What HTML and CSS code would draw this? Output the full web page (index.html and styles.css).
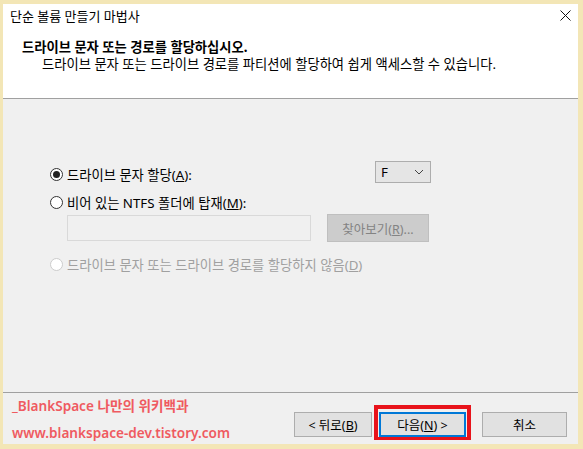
FILE: index.html
```html
<!DOCTYPE html>
<html lang="ko">
<head>
    <meta charset="UTF-8">
    <meta name="viewport" content="width=device-width, initial-scale=1.0">
    <title>단순 볼륨 만들기 마법사</title>
    <link rel="stylesheet" href="styles.css">
</head>
<body>
    <div class="dialog">
        <div class="header">
            <div class="titlebar">
                <span class="title">단순 볼륨 만들기 마법사</span>
                <svg class="close" width="11" height="11" viewBox="0 0 11 11">
                    <path d="M0.5 0.5 L10.5 10.5 M10.5 0.5 L0.5 10.5" stroke="#111" stroke-width="1" fill="none"/>
                </svg>
            </div>
            <div class="heading">드라이브 문자 또는 경로를 할당하십시오.</div>
            <div class="subheading">드라이브 문자 또는 드라이브 경로를 파티션에 할당하여 쉽게 액세스할 수 있습니다.</div>
        </div>

        <div class="content">
            <div class="row row-letter">
                <label class="radio">
                    <span class="radio-dot checked"></span>
                    <span>드라이브 문자 할당(<u>A</u>):</span>
                </label>
                <div class="select">
                    <span>F</span>
                    <svg width="10" height="6" viewBox="0 0 10 6">
                        <path d="M1 1 L5 5 L9 1" stroke="#444" stroke-width="1" fill="none"/>
                    </svg>
                </div>
            </div>
            <div class="row row-mount">
                <label class="radio">
                    <span class="radio-dot"></span>
                    <span>비어 있는 NTFS 폴더에 탑재(<u>M</u>):</span>
                </label>
            </div>
            <div class="row row-path">
                <div class="path-field"></div>
                <button class="btn btn-disabled" type="button">찾아보기(<u>R</u>)...</button>
            </div>
            <div class="row row-none">
                <label class="radio radio-disabled">
                    <span class="radio-dot"></span>
                    <span>드라이브 문자 또는 드라이브 경로를 할당하지 않음(<u>D</u>)</span>
                </label>
            </div>
        </div>

        <div class="footer">
            <div class="watermark">
                <div>_BlankSpace 나만의 위키백과</div>
                <div>www.blankspace-dev.tistory.com</div>
            </div>
            <div class="buttons">
                <button class="btn btn-back" type="button">&lt; 뒤로(<u>B</u>)</button>
                <span class="highlight">
                    <button class="btn btn-next" type="button">다음(<u>N</u>) &gt;</button>
                </span>
                <button class="btn btn-cancel" type="button">취소</button>
            </div>
        </div>
    </div>
</body>
</html>
```

FILE: styles.css
```css
body {
    margin: 0;
    background-color: #f3e6b6;
    font-family: "Noto Sans", "Noto Sans CJK KR", sans-serif;
    font-size: 13.3px;
    color: #000;
}

.dialog {
    width: 575px;
    height: 440px;
    margin: 4px 0 0 3px;
    background-color: #f0f0f0;
    display: flex;
    flex-direction: column;
}

.header {
    height: 94px;
    background-color: #fff;
    border-bottom: 1px solid #a0a0a0;
}

.titlebar {
    height: 22px;
    display: flex;
    align-items: center;
    justify-content: space-between;
    padding: 0 7px 0 7px;
}

.title {
    font-size: 13px;
}

.heading {
    font-weight: bold;
    margin: 13px 0 0 19px;
    line-height: 17px;
}

.subheading {
    margin-left: 39px;
    line-height: 16px;
}

.content {
    height: 293px;
    padding: 62px 0 0 47px;
    box-sizing: border-box;
}

.row {
    display: flex;
    align-items: center;
}

.row-letter {
    height: 22px;
}

.row-letter .radio {
    width: 325px;
    height: 16px;
    align-self: flex-end;
    margin-bottom: 1px;
}

.row-mount {
    margin-top: 11px;
    height: 16px;
}

.row-path {
    margin: 4px 0 0 17px;
    gap: 16px;
    height: 28px;
}

.row-none {
    margin-top: 14px;
    height: 16px;
}

.radio {
    display: flex;
    align-items: center;
    gap: 4px;
}

.radio-dot {
    width: 11px;
    height: 11px;
    border: 1px solid #333;
    border-radius: 50%;
    background-color: #fff;
    position: relative;
}

.radio-dot.checked::after {
    content: "";
    position: absolute;
    left: 2px;
    top: 2px;
    width: 7px;
    height: 7px;
    border-radius: 50%;
    background-color: #222;
}

.radio-disabled {
    color: #a0a0a0;
}

.radio-disabled .radio-dot {
    border-color: #cccccc;
}

.select {
    width: 43px;
    height: 20px;
    border: 1px solid #adadad;
    background-color: #e5e5e5;
    display: flex;
    align-items: center;
    justify-content: space-between;
    padding: 0 6px 0 5px;
}

.path-field {
    width: 242px;
    height: 24px;
    border: 1px solid #d9d9d9;
    background-color: #f0f0f0;
}

.btn {
    font-family: inherit;
    font-size: 12.5px;
    border: 1px solid #adadad;
    background-color: #e1e1e1;
    color: #000;
    padding: 0;
    height: 25px;
}

.btn-disabled {
    width: 102px;
    height: 28px;
    border-color: #bfbfbf;
    background-color: #cccccc;
    color: #838383;
}

.footer {
    flex: 1;
    border-top: 1px solid #a0a0a0;
    position: relative;
    display: flex;
    justify-content: flex-end;
}

.buttons {
    display: flex;
    align-items: flex-end;
    padding: 0 11px 7px 0;
}

.btn-back {
    width: 78px;
}

.highlight {
    display: flex;
    margin: 0 11px -3px 2px;
    padding: 3px 1px 0;
    border: 4px solid #e8131b;
    border-bottom-width: 3px;
}

.btn-next {
    width: 87px;
    border: 2px solid #0078d7;
}

.btn-cancel {
    width: 85px;
}

.watermark {
    position: absolute;
    left: 9px;
    top: -1px;
    color: #ef5a60;
    font-weight: 600;
    font-size: 13.6px;
    line-height: 27px;
}
```
